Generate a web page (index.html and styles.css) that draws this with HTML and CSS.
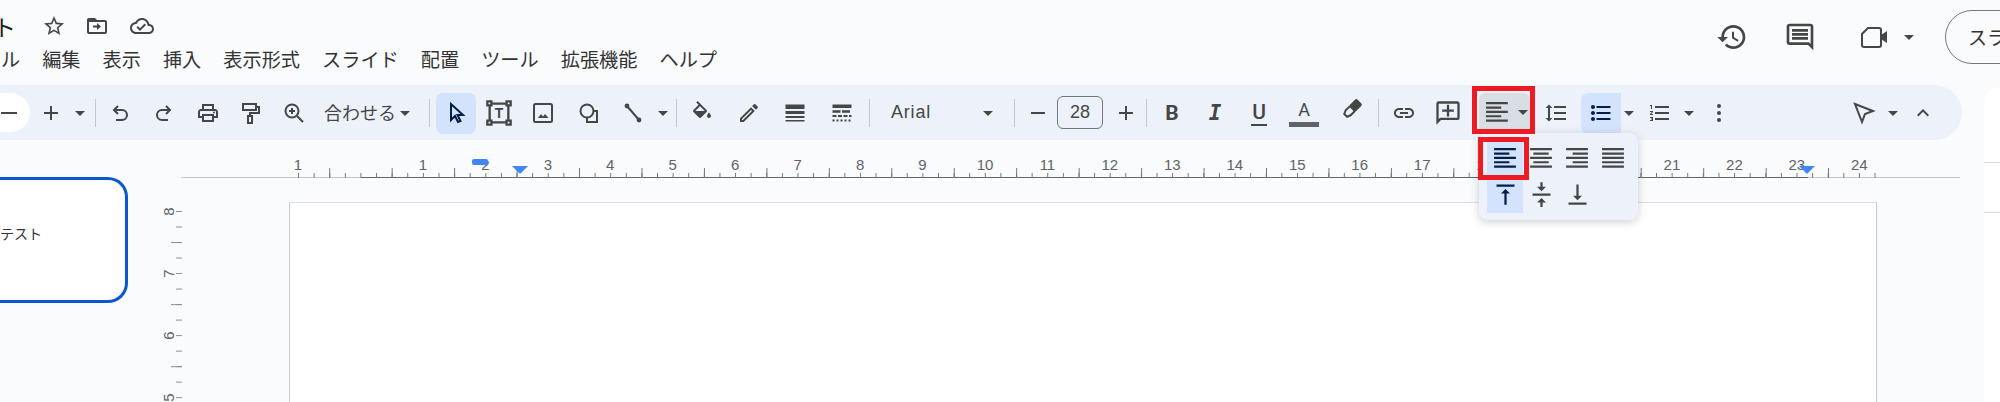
FILE: index.html
```html
<!DOCTYPE html>
<html lang="ja">
<head>
  <meta charset="UTF-8" />
  <meta name="viewport" content="width=device-width, initial-scale=1.0"/>
  <title>スライド</title>
  <link rel="stylesheet" href="styles.css">
</head>
<body>
  <div class="app">
    <!-- Title and menu -->
    <header class="topbar">
      <div class="doc-head">
        <div class="title-row">
          <span class="doc-title">ト</span>
          <svg class="ico star" viewBox="0 0 24 24"><path d="M22 9.24l-7.19-.62L12 2 9.19 8.63 2 9.24l5.46 4.73L5.82 21 12 17.27 18.18 21l-1.63-7.03L22 9.24zM12 15.4l-3.76 2.27 1-4.28-3.32-2.88 4.38-.38L12 6.1l1.71 4.04 4.38.38-3.32 2.88 1 4.28L12 15.4z"/></svg>
          <svg class="ico folder" viewBox="0 0 24 24"><path d="M20 6h-8l-2-2H4c-1.1 0-2 .9-2 2v12c0 1.1.9 2 2 2h16c1.1 0 2-.9 2-2V8c0-1.1-.9-2-2-2zm0 12H4V8h16v10zm-8-2l4-3.5-4-3.500v2.500H8v2h4V16z"/></svg>
          <svg class="ico cloud" viewBox="0 0 24 24"><path d="M19.35 10.04C18.67 6.59 15.64 4 12 4 9.11 4 6.6 5.64 5.35 8.04 2.34 8.36 0 10.91 0 14c0 3.31 2.69 6 6 6h13c2.76 0 5-2.24 5-5 0-2.64-2.05-4.78-4.65-4.96zM19 18H6c-2.21 0-4-1.79-4-4 0-2.05 1.53-3.76 3.56-3.97l1.07-.11.5-.95C8.08 7.14 9.94 6 12 6c2.62 0 4.88 1.86 5.39 4.43l.3 1.5 1.53.11c1.56.1 2.78 1.41 2.78 2.96 0 1.65-1.35 3-3 3zm-9-3.82l-2.09-2.09L6.5 13.5 10 17l6.01-6.01-1.41-1.41z"/></svg>
        </div>
        <nav class="menu">
          <span class="menu-cut">ル</span>
          <span>編集</span>
          <span>表示</span>
          <span>挿入</span>
          <span>表示形式</span>
          <span>スライド</span>
          <span>配置</span>
          <span>ツール</span>
          <span>拡張機能</span>
          <span>ヘルプ</span>
        </nav>
      </div>
      <div class="head-actions">
        <svg class="ico big" viewBox="0 0 24 24"><path d="M13 3c-4.97 0-9 4.03-9 9H1l3.89 3.89.07.14L9 12H6c0-3.87 3.13-7 7-7s7 3.13 7 7-3.13 7-7 7c-1.93 0-3.68-.79-4.94-2.06l-1.42 1.42C8.27 19.99 10.51 21 13 21c4.97 0 9-4.03 9-9s-4.03-9-9-9zm-1 5v5l4.28 2.54.72-1.21-3.5-2.08V8H12z"/></svg>
        <svg class="ico big ml-36" viewBox="0 0 24 24"><path d="M21.99 4c0-1.1-.89-2-1.99-2H4c-1.1 0-2 .9-2 2v12c0 1.1.9 2 2 2h14l4 4-.01-18zM20 4v13.17L18.83 16H4V4h16zM6 12h12v2H6zm0-3h12v2H6zm0-3h12v2H6z"/></svg>
        <svg class="ico big ml-43" viewBox="0 0 32 32"><path class="line" stroke-width="3" d="M9 7H20a2 2 0 0 1 2 2V24a2 2 0 0 1-2 2H5a2 2 0 0 1-2-2V13Z"/><path d="M22 14l6-4v12l-6-4z"/></svg>
        <i class="caret ml-13"></i>
        <div class="slideshow-btn">スライドショー</div>
      </div>
    </header>

    <main class="main">
      <!-- Toolbar -->
      <div class="toolbar">
        <div class="zoom-pill"><svg class="ico" viewBox="0 0 24 24"><rect x="1" y="11" width="16" height="2"/></svg></div>
        <div class="tb w-32"><svg class="ico" viewBox="0 0 24 24"><path d="M19 13h-6v6h-2v-6H5v-2h6V5h2v6h6z"/></svg></div>
        <div class="tb w-26"><i class="caret"></i></div>
        <div class="sep ml-2 mr-2"></div>
        <div class="tb w-44"><svg class="ico" viewBox="0 0 24 24"><path class="line" d="M10 5L6 9l4 4M6 9h8a5 5 0 0 1 0 10H8"/></svg></div>
        <div class="tb w-44"><svg class="ico" viewBox="0 0 24 24"><path class="line" d="M14 5l4 4-4 4M18 9h-8a5 5 0 0 0 0 10h6"/></svg></div>
        <div class="tb w-44"><svg class="ico" viewBox="0 0 24 24"><path d="M19 8h-1V3H6v5H5c-1.66 0-3 1.34-3 3v6h4v4h12v-4h4v-6c0-1.66-1.34-3-3-3zM8 5h8v3H8V5zm8 14H8v-4h8v4zm2-4v-2H6v2H4v-4c0-.55.45-1 1-1h14c.55 0 1 .45 1 1v4h-2z"/><circle cx="18" cy="11.5" r="1"/></svg></div>
        <div class="tb w-40"><svg class="ico" viewBox="0 0 24 24"><path class="line" d="M5 3h13v6H5zM18 6h3v6h-9v3M10 15h4v7h-4z"/></svg></div>
        <div class="tb w-48"><svg class="ico" viewBox="0 0 24 24"><circle class="line" cx="10" cy="10" r="6.5"/><path class="line" d="M15 15l6 6M10 7v6M7 10h6"/></svg></div>
        <div class="tb-text ml-6 w-71">合わせる</div>
        <div class="tb w-20"><i class="caret"></i></div>
        <div class="sep ml-14 mr-6"></div>
        <div class="tb w-40 on"><svg class="ico navy" viewBox="0 0 24 24"><path class="line" d="M7 3v16l4-4 3 6 2.500-1-3-6H19z"/></svg></div>
        <div class="tb w-46"><svg class="ico wide" viewBox="0 0 24 24"><path class="line" stroke-width="1.6" d="M5.500 4H18.500M20 5.500V18.500M18.500 20H5.500M4 18.500V5.500M2 2h3.500v3.500H2zM18.500 2H22v3.500h-3.500zM18.500 18.500H22V22h-3.500zM2 18.500h3.500V22H2z"/><text class="svg-t" x="12" y="16.500">T</text></svg></div>
        <div class="tb w-42"><svg class="ico" viewBox="0 0 24 24"><rect class="line" x="3" y="3" width="18" height="18" rx="1.500"/><path d="M7 17l3-4 2 2.500 2-2.500 3.500 4z"/></svg></div>
        <div class="tb w-50"><svg class="ico" viewBox="0 0 24 24"><circle class="line" cx="10" cy="10" r="6.500"/><path class="line" d="M16.500 10H20v11H10v-4.500"/></svg></div>
        <div class="tb w-38"><svg class="ico" viewBox="0 0 24 24"><path class="line" d="M6 5l12 14"/><circle cx="6" cy="5" r="2.400"/><circle cx="18" cy="19" r="2.400"/></svg></div>
        <div class="tb w-22"><i class="caret"></i></div>
        <div class="sep ml-2 mr-3"></div>
        <div class="tb w-44"><svg class="ico" viewBox="0 0 24 24"><path d="M16.560 8.940L7.620 0 6.210 1.410l2.380 2.380-5.150 5.150c-.59.590-.59 1.540 0 2.120l5.500 5.500c.29.29.68.44 1.060.44s.77-.15 1.060-.44l5.500-5.500c.59-.58.59-1.530 0-2.120zM5.210 10L10 5.210 14.790 10H5.210zM19 11.500s-2 2.170-2 3.500c0 1.100.9 2 2 2s2-.9 2-2c0-1.330-2-3.500-2-3.500z"/></svg></div>
        <div class="tb w-50"><svg class="ico" viewBox="0 0 24 24"><path d="M3 17.250V21h3.750L17.810 9.940l-3.750-3.750L3 17.250zM5.920 19H5v-.92l9.060-9.060.92.92L5.920 19zM20.710 7.040c.39-.39.39-1.020 0-1.410l-2.340-2.340c-.2-.2-.45-.29-.71-.29s-.51.09-.7.28l-1.830 1.830 3.750 3.750 1.830-1.820z"/></svg></div>
        <div class="tb w-42"><svg class="ico" viewBox="0 0 24 24"><rect x="2.500" y="3.500" width="19" height="4.500"/><rect x="2.500" y="10" width="19" height="3"/><rect x="2.500" y="15" width="19" height="2"/><rect x="2.500" y="19" width="19" height="1.500"/></svg></div>
        <div class="tb w-52"><svg class="ico" viewBox="0 0 24 24"><rect x="2.500" y="3.500" width="19" height="3.500"/><path class="dash-a" d="M2.500 10.500h19"/><path class="dash-b" d="M2.500 15h19"/><path class="dash-c" d="M2.500 19.500h19"/></svg></div>
        <div class="sep ml-1"></div>
        <div class="font-name ml-21 w-87">Arial</div>
        <div class="tb w-20"><i class="caret"></i></div>
        <div class="sep ml-16 mr-4"></div>
        <div class="tb w-38"><svg class="ico" viewBox="0 0 24 24"><rect x="5" y="11" width="14" height="2"/></svg></div>
        <div class="size-box">28</div>
        <div class="tb ml-3 w-40"><svg class="ico" viewBox="0 0 24 24"><path d="M19 13h-6v6h-2v-6H5v-2h6V5h2v6h6z"/></svg></div>
        <div class="sep"></div>
        <div class="tb w-50 fmt fmt-b">B</div>
        <div class="tb w-36 fmt fmt-i">I</div>
        <div class="tb w-52 fmt"><span class="fmt-u">U</span></div>
        <div class="tb w-38 fmt-a">A<span class="color-bar"></span></div>
        <div class="tb w-55"><svg class="ico raise" viewBox="0 0 24 24"><g transform="rotate(45 12 12)"><rect x="7.500" y="0" width="9" height="11" rx="2"/><path class="line" d="M8.500 10v6l1.500 3.500h4l1.500-3.500v-6"/></g></svg></div>
        <div class="sep"></div>
        <div class="tb w-50"><svg class="ico" viewBox="0 0 24 24"><path d="M3.900 12c0-1.710 1.390-3.100 3.100-3.100h4V7H7c-2.760 0-5 2.240-5 5s2.240 5 5 5h4v-1.900H7c-1.710 0-3.100-1.390-3.100-3.100zM8 13h8v-2H8v2zm9-6h-4v1.900h4c1.710 0 3.100 1.390 3.100 3.100s-1.390 3.100-3.100 3.100h-4V17h4c2.760 0 5-2.240 5-5s-2.240-5-5-5z"/></svg></div>
        <div class="tb w-38"><svg class="ico wide flip" viewBox="0 0 24 24"><path d="M22 4c0-1.100-.9-2-2-2H4c-1.100 0-2 .9-2 2v12c0 1.100.9 2 2 2h14l4 4V4zm-2 13.170L18.830 16H4V4h16v13.170zM13 5h-2v4H7v2h4v4h2v-4h4V9h-4z"/></svg></div>

        <!-- Align menu, open -->
        <div class="align-wrap ml-12">
          <div class="align-btn">
            <svg class="ico" viewBox="0 0 22 22"><path d="M0 1h20v2H0zM0 5h14v2H0zM0 9h20v2H0zM0 13h14v2H0zM0 17h20v2H0z"/></svg>
            <i class="caret ml-8"></i>
          </div>
          <div class="mark mark-btn"></div>
          <div class="align-popup">
            <div class="pop-cell on">
              <svg class="ico navy" viewBox="0 0 22 22"><path d="M1 1h20v2H1zM1 5h14v2H1zM1 9h20v2H1zM1 13h14v2H1zM1 17h20v2H1z"/></svg>
              <div class="mark mark-cell"></div>
            </div>
            <div class="pop-cell"><svg class="ico" viewBox="0 0 22 22"><path d="M1 1h20v2H1zM4 5h14v2H4zM1 9h20v2H1zM4 13h14v2H4zM1 17h20v2H1z"/></svg></div>
            <div class="pop-cell"><svg class="ico" viewBox="0 0 22 22"><path d="M1 1h20v2H1zM7 5h14v2H7zM1 9h20v2H1zM7 13h14v2H7zM1 17h20v2H1z"/></svg></div>
            <div class="pop-cell"><svg class="ico" viewBox="0 0 22 22"><path d="M1 1h20v2H1zM1 5h20v2H1zM1 9h20v2H1zM1 13h20v2H1zM1 17h20v2H1z"/></svg></div>
            <div class="pop-cell on"><svg class="ico navy valign" viewBox="0 0 24 24"><path d="M8 11h3v10h2V11h3l-4-4-4 4zM4 3v2h16V3H4z"/></svg></div>
            <div class="pop-cell"><svg class="ico valign" viewBox="0 0 24 24"><path d="M8 19h3v4h2v-4h3l-4-4-4 4zm8-14h-3V1h-2v4H8l4 4 4-4zM4 11v2h16v-2H4z"/></svg></div>
            <div class="pop-cell"><svg class="ico valign" viewBox="0 0 24 24"><path d="M16 13h-3V3h-2v10H8l4 4 4-4zM4 19v2h16v-2H4z"/></svg></div>
          </div>
        </div>

        <div class="tb w-51"><svg class="ico" viewBox="0 0 24 24"><path d="M6 7h2.500L5 3.500 1.500 7H4v10H1.500L5 20.500 8.500 17H6V7zm4-2v2h12V5H10zm0 14h12v-2H10v2zm0-6h12v-2H10v2z"/></svg></div>
        <div class="tb w-40 on on-left"><svg class="ico navy" viewBox="0 0 24 24"><path d="M4 10c-1.100 0-2 .9-2 2s.9 2 2 2 2-.9 2-2-.9-2-2-2zm0-6c-1.100 0-2 .9-2 2s.9 2 2 2 2-.9 2-2-.9-2-2-2zm0 12c-1.100 0-2 .9-2 2s.9 2 2 2 2-.9 2-2-.9-2-2-2zM7.500 19h14v-2h-14v2zm0-6h14v-2h-14v2zm0-8v2h14V5h-14z"/></svg></div>
        <div class="tb w-16"><i class="caret"></i></div>
        <div class="tb w-46"><svg class="ico" viewBox="0 0 24 24"><path d="M2 17h2v.5H3v1h1v.5H2v1h3v-4H2v1zm1-9h1V4H2v1h1v3zm-1 3h1.800L2 13.100v.9h3v-1H3.200L5 10.900V10H2v1zm5-6v2h14V5H7zm0 14h14v-2H7v2zm0-6h14v-2H7v2z"/></svg></div>
        <div class="tb w-12"><i class="caret"></i></div>
        <div class="tb w-48"><svg class="ico" viewBox="0 0 24 24"><circle cx="12" cy="5" r="2"/><circle cx="12" cy="12" r="2"/><circle cx="12" cy="19" r="2"/></svg></div>
        <div class="tb ml-101 w-40"><svg class="ico" viewBox="0 0 24 24"><path class="line" d="M3 3l18 7-8 3-3 8z"/></svg></div>
        <div class="tb w-18"><i class="caret"></i></div>
        <div class="tb w-42"><svg class="ico" viewBox="0 0 24 24"><path d="M7.410 15.410L12 10.830l4.590 4.580L18 14l-6-6-6 6z"/></svg></div>
      </div>

      <div class="workspace">
        <!-- Slide list -->
        <div class="filmstrip">
          <div class="thumb">テスト</div>
        </div>

        <div class="editor">
          <!-- Horizontal ruler -->
          <div class="hruler">
            <div class="hruler-nums">
              <span>1</span><span></span><span>1</span><span>2</span><span>3</span><span>4</span><span>5</span><span>6</span><span>7</span><span>8</span><span>9</span><span>10</span><span>11</span><span>12</span><span>13</span><span>14</span><span>15</span><span>16</span><span>17</span><span>18</span><span>19</span><span>20</span><span>21</span><span>22</span><span>23</span><span>24</span>
            </div>
            <div class="hruler-ticks"></div>
            <div class="indent-bar"></div>
            <div class="indent-tri tri-left"></div>
            <div class="indent-tri tri-right"></div>
          </div>

          <div class="canvas-row">
            <!-- Vertical ruler -->
            <div class="vruler">
              <div class="vruler-nums">
                <span><b>8</b></span><span><b>7</b></span><span><b>6</b></span><span><b>5</b></span>
              </div>
              <div class="vruler-ticks"></div>
            </div>
            <div class="slide-page"></div>
          </div>
        </div>
      </div>
    </main>

    <!-- Side panel -->
    <aside class="side-panel">
      <div class="panel-line first"></div>
      <div class="panel-line second"></div>
    </aside>
  </div>
</body>
</html>
```

FILE: styles.css
```css
html, body {
  margin: 0;
  height: 100%;
  overflow: hidden;
}

body {
  background: #f9fbfd;
  color: #333;
  font-family: "Noto Sans CJK JP", "Liberation Sans", sans-serif;
}

.app {
  display: grid;
  grid-template-columns: 1984px 16px;
  grid-template-rows: 85px 317px;
  height: 402px;
  overflow: hidden;
}

/* Icons */
.ico {
  display: block;
  width: 24px;
  height: 24px;
  flex-shrink: 0;
  fill: #444746;
}

.ico.big { width: 32px; height: 32px; }
.ico.wide { width: 28px; height: 28px; }
.ico.valign { width: 27px; height: 27px; }
.ico.navy { fill: #041e49; }
.ico.flip { transform: scaleX(-1); }
.ico.raise { margin-bottom: 7px; }

.line {
  fill: none;
  stroke: #444746;
  stroke-width: 2;
}

.navy .line { stroke: #041e49; }

.svg-t {
  font: bold 12px "Liberation Sans", sans-serif;
  text-anchor: middle;
}

.dash-a, .dash-b, .dash-c {
  fill: none;
  stroke: #444746;
}

.dash-a { stroke-width: 2.5; stroke-dasharray: 8 1.5; }
.dash-b { stroke-width: 2; stroke-dasharray: 4 1.5; }
.dash-c { stroke-width: 2; stroke-dasharray: 2 2; }

.caret {
  display: block;
  flex-shrink: 0;
  width: 0;
  height: 0;
  border-left: 5px solid transparent;
  border-right: 5px solid transparent;
  border-top: 5px solid #444746;
}

/* Spacing helpers */
.ml-1 { margin-left: 1px; }
.ml-2 { margin-left: 2px; }
.ml-3 { margin-left: 3px; }
.ml-6 { margin-left: 6px; }
.ml-8 { margin-left: 8px; }
.ml-12 { margin-left: 12px; }
.ml-13 { margin-left: 13px; }
.ml-14 { margin-left: 14px; }
.ml-16 { margin-left: 16px; }
.ml-21 { margin-left: 21px; }
.ml-36 { margin-left: 36px; }
.ml-43 { margin-left: 43px; }
.ml-101 { margin-left: 101px; }
.mr-2 { margin-right: 2px; }
.mr-3 { margin-right: 3px; }
.mr-4 { margin-right: 4px; }
.mr-6 { margin-right: 6px; }

.w-12 { width: 12px; }
.w-16 { width: 16px; }
.w-18 { width: 18px; }
.w-20 { width: 20px; }
.w-22 { width: 22px; }
.w-26 { width: 26px; }
.w-32 { width: 32px; }
.w-36 { width: 36px; }
.w-38 { width: 38px; }
.w-40 { width: 40px; }
.w-42 { width: 42px; }
.w-44 { width: 44px; }
.w-46 { width: 46px; }
.w-48 { width: 48px; }
.w-50 { width: 50px; }
.w-51 { width: 51px; }
.w-52 { width: 52px; }
.w-55 { width: 55px; }
.w-71 { width: 71px; }
.w-87 { width: 87px; }

/* Title and menu */
.topbar {
  grid-column: 1 / 3;
  display: flex;
}

.doc-head {
  flex: 1;
  padding-top: 13px;
}

.title-row {
  display: flex;
  align-items: center;
  height: 26px;
}

.doc-title {
  width: 49px;
  margin-left: -7px;
  font-size: 23px;
  line-height: 26px;
  color: #1f1f1f;
  flex-shrink: 0;
}

.star { margin-right: 19px; }
.folder { margin-right: 21px; }

.menu {
  display: flex;
  gap: 22px;
  height: 24px;
  margin-top: 8px;
  font-size: 19.2px;
  line-height: 24px;
  white-space: nowrap;
}

.menu-cut {
  margin-left: 1px;
}

.head-actions {
  display: flex;
  align-items: center;
  width: 284px;
  height: 54px;
  margin-top: 10px;
  overflow: hidden;
}

.slideshow-btn {
  flex-shrink: 0;
  height: 54px;
  margin-left: 31px;
  padding: 0 22px;
  box-sizing: border-box;
  border: 1px solid #747775;
  border-radius: 27px;
  font-size: 19px;
  line-height: 52px;
}

/* Toolbar */
.main {
  min-width: 0;
}

.toolbar {
  position: relative;
  z-index: 2;
  display: flex;
  align-items: center;
  width: 1962px;
  height: 55px;
  background: #edf2fa;
  border-radius: 0 28px 28px 0;
}

.zoom-pill {
  display: flex;
  align-items: center;
  flex-shrink: 0;
  width: 30px;
  height: 39px;
  margin-right: 5px;
  background: #fff;
  border-radius: 0 20px 20px 0;
}

.tb {
  display: flex;
  align-items: center;
  justify-content: center;
  flex-shrink: 0;
  height: 41px;
  margin-top: 1px;
}

.tb.on {
  background: #d3e3fd;
  border-radius: 7px;
}

.tb.on-left {
  border-radius: 7px 0 0 7px;
}

.sep {
  flex-shrink: 0;
  width: 1px;
  height: 28px;
  background: #c7c7c7;
}

.tb-text {
  flex-shrink: 0;
  margin-bottom: 2px;
  font-size: 18px;
  white-space: nowrap;
  color: #444746;
}

.font-name {
  flex-shrink: 0;
  font: 18px "Liberation Sans", sans-serif;
  letter-spacing: 0.8px;
  color: #444746;
}

.size-box {
  flex-shrink: 0;
  width: 46px;
  height: 33px;
  box-sizing: border-box;
  border: 1px solid #747775;
  border-radius: 6px;
  font: 18px/31px "Liberation Sans", sans-serif;
  text-align: center;
  color: #444746;
}

.fmt {
  color: #444746;
  font-size: 21px;
}

.fmt-b {
  font-family: Roboto, sans-serif;
  font-weight: 700;
}

.fmt-i {
  font-family: "DejaVu Sans Mono", monospace;
  font-weight: 700;
  font-style: italic;
}

.fmt-u {
  font-family: Roboto, sans-serif;
  font-size: 21px;
  font-weight: 500;
  line-height: 23px;
  padding: 0 1px;
  border-bottom: 2px solid #444746;
}

.fmt-a {
  flex-direction: column;
  font: 18px/20px Roboto, sans-serif;
  color: #444746;
}

.color-bar {
  width: 30px;
  height: 5px;
  margin-top: 2px;
  background: #5f6368;
}

/* Align menu */
.align-wrap {
  position: relative;
  flex-shrink: 0;
  width: 51px;
  height: 40px;
}

.align-btn {
  display: flex;
  align-items: center;
  height: 40px;
  padding-left: 7px;
  box-sizing: border-box;
  background: #d9dee4;
  border-radius: 6px;
}

.align-popup {
  position: absolute;
  top: 40px;
  left: 0;
  display: grid;
  grid-template-columns: repeat(4, 36px);
  grid-auto-rows: 36px;
  width: 159px;
  height: 87px;
  padding: 8px 0 0 8px;
  box-sizing: border-box;
  background: #edf2fa;
  border-radius: 8px;
  box-shadow: 0 2px 8px rgba(60, 64, 67, 0.25);
}

.pop-cell {
  position: relative;
  display: flex;
  align-items: center;
  justify-content: center;
}

.pop-cell.on {
  background: #d3e3fd;
}

/* Red annotation boxes */
.mark {
  position: absolute;
  z-index: 3;
  box-sizing: border-box;
  border: 5px solid #ed1c24;
}

.mark-btn {
  top: -7px;
  left: -7px;
  width: 63px;
  height: 48px;
}

.mark-cell {
  top: -4px;
  left: -9px;
  width: 51px;
  height: 43px;
}

/* Workspace */
.workspace {
  display: flex;
  height: 262px;
  overflow: hidden;
}

.filmstrip {
  flex-shrink: 0;
  width: 128px;
  padding-top: 37px;
}

.thumb {
  display: flex;
  align-items: center;
  height: 126px;
  padding-bottom: 14px;
  box-sizing: border-box;
  background: #fff;
  border: 3px solid #0b57d0;
  border-left: 0;
  border-radius: 0 20px 20px 0;
  font-size: 14px;
}

.editor {
  flex: 1;
  min-width: 0;
}

/* Horizontal ruler */
.hruler {
  position: relative;
  width: 1779px;
  height: 38px;
  margin-left: 53px;
  box-sizing: border-box;
  padding-top: 17px;
  background:
    linear-gradient(to right, #c4c7c5 180px, #666 180px, #666 1627px, #c4c7c5 1627px)
    left bottom / 100% 1px no-repeat;
}

.hruler-nums {
  display: flex;
  height: 16px;
  padding-left: 85.77px;
  font: 15px/16px "Liberation Sans", sans-serif;
  color: #5f6368;
}

.hruler-nums span {
  flex-shrink: 0;
  width: 62.46px;
  text-align: center;
}

/* short ticks every quarter, a tall one in the middle of each unit */
.hruler-ticks {
  width: 1578px;
  height: 10px;
  margin: -5px 0 0 117px;
  background-image:
    linear-gradient(to right, #747775 1px, transparent 1px),
    linear-gradient(to right, #747775 1px, transparent 1px);
  background-repeat: repeat-x;
  background-size: 15.615px 5px, 62.46px 10px;
  background-position: 0 bottom, 31.23px bottom;
}

.indent-bar {
  position: absolute;
  top: 19px;
  left: 291px;
  width: 16px;
  height: 6px;
  background: #4285f4;
  border-radius: 2px;
}

.indent-tri {
  position: absolute;
  top: 26px;
  width: 0;
  height: 0;
  border-left: 8px solid transparent;
  border-right: 8px solid transparent;
  border-top: 8px solid #4285f4;
}

.tri-left { left: 331px; }
.tri-right { left: 1618px; }

/* Canvas */
.canvas-row {
  display: flex;
}

.vruler {
  display: flex;
  flex-shrink: 0;
  margin-left: 33px;
}

.vruler-nums {
  width: 14px;
  padding-top: 2px;
  font: 15px "Liberation Sans", sans-serif;
  color: #5f6368;
}

.vruler-nums span {
  display: flex;
  align-items: center;
  justify-content: center;
  height: 62.1px;
}

.vruler-nums b {
  font-weight: 400;
  transform: rotate(-90deg);
}

.vruler-ticks {
  width: 11px;
  height: 220px;
  margin: 33px 0 0 -4px;
  background-image:
    linear-gradient(to bottom, #8a8d8f 1px, transparent 1px),
    linear-gradient(to bottom, #8a8d8f 1px, transparent 1px);
  background-repeat: repeat-y;
  background-size: 6px 15.525px, 11px 62.1px;
  background-position: right 0, right 31.05px;
}

.slide-page {
  flex-shrink: 0;
  width: 1588px;
  height: 240px;
  margin: 24px 0 0 107px;
  box-sizing: border-box;
  background: #fff;
  border: 1px solid #c9cccf;
  border-top-color: #dadce0;
  border-bottom: 0;
}

/* Side panel */
.side-panel {
  grid-column: 2;
  grid-row: 2;
  margin-top: 2px;
  background: #fff;
  border-top-left-radius: 16px;
}

.panel-line {
  height: 1px;
  background: #dadce0;
}

.panel-line.first { margin-top: 75px; }
.panel-line.second { margin-top: 49px; }
```
